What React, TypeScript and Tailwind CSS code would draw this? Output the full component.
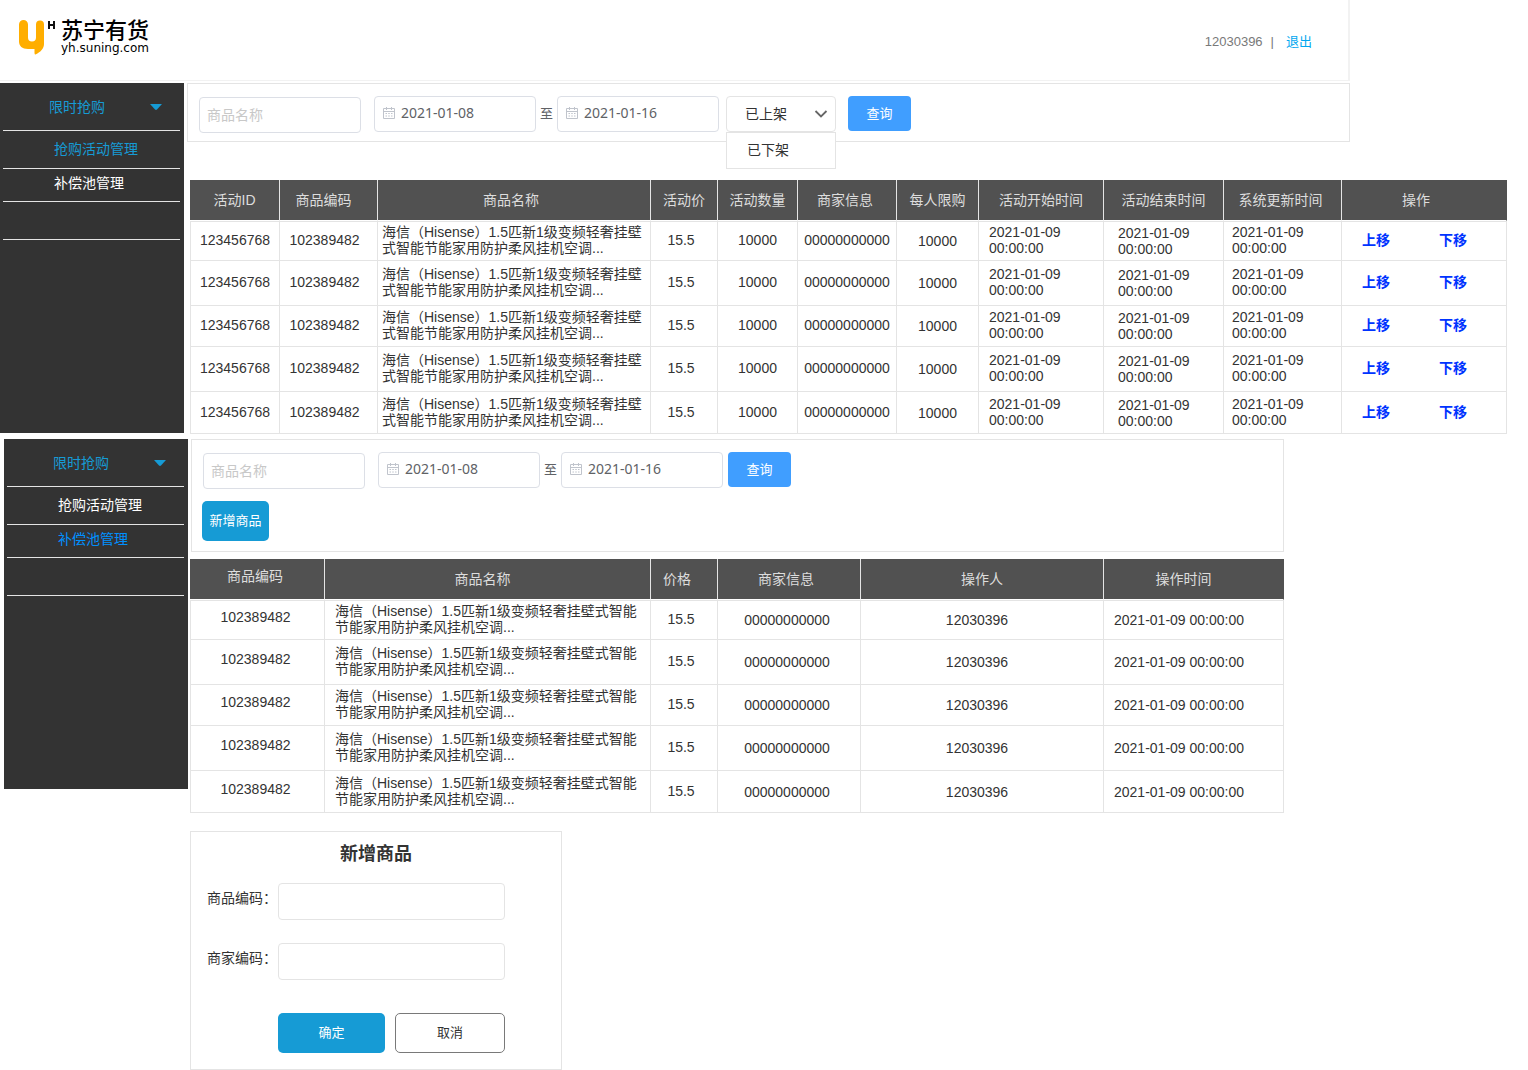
import React from "react";

const PRODUCT = "海信（Hisense）1.5匹新1级变频轻奢挂壁式智能节能家用防护柔风挂机空调...";
const STAMP = "2021-01-09 00:00:00";
const ROW_HEIGHTS = ["h-10", "h-[45px]", "h-[41px]", "h-[45px]", "h-[42px]"];

type Column = {
  title: string;
  width: string;
  head: string;
  cell: string;
  value: React.ReactNode;
};

function MoveActions() {
  return (
    <div className="flex gap-[49px]">
      <button type="button" className="font-bold text-[#0033ff]">上移</button>
      <button type="button" className="font-bold text-[#0033ff]">下移</button>
    </div>
  );
}

const activityColumns: Column[] = [
  { title: "活动ID", width: "w-[90px]", head: "", cell: "text-center pb-0.5", value: "123456768" },
  { title: "商品编码", width: "w-[98px]", head: "pr-2.5", cell: "text-center pr-2 pb-0.5", value: "102389482" },
  { title: "商品名称", width: "w-[273px]", head: "pr-1.5", cell: "pl-1 pr-1 pb-0.5", value: PRODUCT },
  { title: "活动价", width: "w-[67px]", head: "", cell: "text-center pr-1.5 pb-0.5", value: "15.5" },
  { title: "活动数量", width: "w-[80px]", head: "", cell: "text-center pb-0.5", value: "10000" },
  { title: "商家信息", width: "w-[99px]", head: "pr-1", cell: "text-center pb-0.5", value: "00000000000" },
  { title: "每人限购", width: "w-[82px]", head: "", cell: "text-center", value: "10000" },
  { title: "活动开始时间", width: "w-[125px]", head: "", cell: "pl-2.5 pb-0.5", value: STAMP },
  { title: "活动结束时间", width: "w-[120px]", head: "", cell: "pl-3.5", value: STAMP },
  { title: "系统更新时间", width: "w-[118px]", head: "pr-1", cell: "pl-2 pb-0.5", value: STAMP },
  { title: "操作", width: "w-[165px]", head: "pr-4", cell: "pl-5 pb-0.5", value: <MoveActions /> },
];

const poolColumns: Column[] = [
  { title: "商品编码", width: "w-[135px]", head: "pr-1 pb-1.5", cell: "text-center pr-1 pb-1.5", value: "102389482" },
  { title: "商品名称", width: "w-[326px]", head: "pr-2.5", cell: "pl-2.5 pr-2 pb-0.5", value: PRODUCT },
  { title: "价格", width: "w-[67px]", head: "pr-3.5", cell: "text-center pr-1.5 pb-0.5", value: "15.5" },
  { title: "商家信息", width: "w-[143px]", head: "pr-1.5", cell: "text-center pr-1", value: "00000000000" },
  { title: "操作人", width: "w-[243px]", head: "", cell: "text-center pr-2.5", value: "12030396" },
  { title: "操作时间", width: "w-[180px]", head: "pr-5", cell: "pl-2.5", value: STAMP },
];

function DataTable({ columns }: { columns: Column[] }) {
  return (
    <table className="w-full table-fixed border-separate border-spacing-0 text-sm/4 text-[#333]">
      <thead>
        <tr className="h-[41px]">
          {columns.map((c) => (
            <th
              key={c.title}
              scope="col"
              className={`${c.width} ${c.head} border-r border-b border-r-[#e4e4e4] border-b-white bg-[#515151] bg-clip-padding text-center font-normal whitespace-nowrap text-[#ddd] last:border-r-[#515151]`}
            >
              {c.title}
            </th>
          ))}
        </tr>
      </thead>
      <tbody>
        {ROW_HEIGHTS.map((h, i) => (
          <tr key={i} className={`group ${h}`}>
            {columns.map((c) => (
              <td
                key={c.title}
                className={`${c.cell} border-r border-b border-[#e4e4e4] group-first:border-t first:border-l`}
              >
                {c.value}
              </td>
            ))}
          </tr>
        ))}
      </tbody>
    </table>
  );
}

function Logo() {
  return (
    <a href="#home" aria-label="苏宁有货" className="flex text-black">
      <svg width="36" height="36" viewBox="0 0 36 36" aria-hidden="true">
        <path
          d="M4.5 0 A4.5 4.5 0 0 1 9 4.5 V17.5 A4 4 0 0 0 17 17.5 V4.5 A4 4 0 0 1 25 4.5 V24 C25 28 22 32 16.500 34.500 Q15.500 34.500 15.500 33 V29 H9 C3 29 0 26 0 21.500 V4.500 A4.500 4.500 0 0 1 4.500 0Z"
          fill="#ffae00"
        />
        <path d="M30 1 V9 M35 1 V9 M30 5 H35" stroke="#111" strokeWidth="2" fill="none" />
      </svg>
      <span className="ml-1.5 flex flex-col">
        <span className="text-[22px]/[22px] font-medium">苏宁有货</span>
        <span className="font-['DejaVu_Sans',sans-serif] text-xs/3">yh.suning.com</span>
      </span>
    </a>
  );
}

function Sidebar({ active, activeColor, className }: { active: number; activeColor: string; className: string }) {
  return (
    <aside className={`h-[350px] w-[184px] shrink-0 bg-[#333] pr-1 pl-[3px] text-sm text-white ${className}`}>
      <nav>
        <button
          type="button"
          className="flex h-12 w-full items-center justify-between border-b border-[#e4e4e4] pr-[18px] pl-[46px] text-[#169bd5]"
        >
          限时抢购
          <svg width="12" height="6" viewBox="0 0 12 6" aria-hidden="true">
            <path d="M0 0H12L7 5.500Q6 6.300 5 5.500Z" fill="#169bd5" />
          </svg>
        </button>
        <a
          href="#activity"
          className={`flex h-[38px] items-center border-b border-[#e4e4e4] pb-0.5 pl-[51px] ${active === 0 ? activeColor : ""}`}
        >
          抢购活动管理
        </a>
        <a
          href="#pool"
          className={`flex h-[33px] items-center border-b border-[#e4e4e4] pb-1 pl-[51px] ${active === 1 ? activeColor : ""}`}
        >
          补偿池管理
        </a>
        <div className="h-[38px] border-b border-[#e4e4e4]" />
      </nav>
    </aside>
  );
}

function CalendarIcon() {
  return (
    <svg width="12" height="12" viewBox="0 0 12 12" className="shrink-0" fill="none" stroke="#c0c4cc" aria-hidden="true">
      <path d="M0.500 1.500H11.500V11.500H0.500Z" />
      <path d="M0 4.500H12M3.500 0V3M8.500 0V3" />
      <path d="M2.500 6.500H9.500M2.500 9H9.500" strokeDasharray="1.500 1.250" />
    </svg>
  );
}

function DateField({ label, value }: { label: string; value: string }) {
  return (
    <label className="flex h-9 w-[162px] items-center gap-1.5 rounded border border-[#dcdfe6] bg-white px-2 pb-0.5">
      <CalendarIcon />
      <input
        type="text"
        aria-label={label}
        defaultValue={value}
        className="w-full min-w-0 font-['Noto_Sans',sans-serif] text-sm text-[#606266] outline-none"
      />
    </label>
  );
}

function SearchFields() {
  return (
    <>
      <input
        type="text"
        aria-label="商品名称"
        placeholder="商品名称"
        className="mt-px h-9 w-[162px] rounded border border-[#dcdfe6] px-[7px] text-sm text-[#606266] outline-none placeholder:text-[#c8c8c8]"
      />
      <div className="ml-[13px] flex items-center">
        <DateField label="开始日期" value="2021-01-08" />
        <span className="w-[21px] text-center text-[13px] text-[#606266]">至</span>
        <DateField label="结束日期" value="2021-01-16" />
      </div>
    </>
  );
}

function QueryButton({ className }: { className: string }) {
  return (
    <button type="button" className={`h-[35px] w-[63px] rounded bg-[#409eff] text-[13px] text-white ${className}`}>
      查询
    </button>
  );
}

function StatusSelect() {
  return (
    <div className="relative ml-[7px] w-[110px]">
      <select
        aria-label="状态"
        className="block h-9 w-full appearance-none rounded border border-[#e4e4e4] bg-white pl-[18px] text-sm text-[#333] outline-none"
      >
        <option>已上架</option>
        <option>已下架</option>
      </select>
      <svg
        width="14"
        height="9"
        viewBox="0 0 14 9"
        className="pointer-events-none absolute top-3.5 right-2"
        fill="none"
        stroke="#666"
        strokeWidth="1.800"
        aria-hidden="true"
      >
        <path d="M1.500 1L7 6.500L12.500 1" />
      </svg>
      <ul className="absolute top-full left-0 w-full border border-[#e4e4e4] bg-white text-sm text-[#333]">
        <li className="flex h-[35px] items-center pb-0.5 pl-5">已下架</li>
      </ul>
    </div>
  );
}

function AddProductForm() {
  const field = "h-[37px] w-[227px] rounded-sm border border-[#e4e4e4] px-2 text-sm outline-none";
  return (
    <form
      className="mt-[18px] flex h-[239px] w-[372px] flex-col border border-[#e4e4e4] pt-2 pl-4 text-[#333]"
      onSubmit={(e) => e.preventDefault()}
    >
      <h2 className="pr-4 text-center text-lg/7 font-bold">新增商品</h2>
      <div className="mt-[15px] flex">
        <label htmlFor="product-code" className="w-[71px] pt-[3px] text-sm/6">商品编码：</label>
        <input id="product-code" type="text" className={field} />
      </div>
      <div className="mt-[23px] flex">
        <label htmlFor="merchant-code" className="w-[71px] pt-[3px] text-sm/6">商家编码：</label>
        <input id="merchant-code" type="text" className={field} />
      </div>
      <div className="mt-[33px] flex gap-2.5 pl-[71px] text-[13px]">
        <button type="submit" className="h-10 w-[107px] rounded-[5px] bg-[#169bd5] text-white">确定</button>
        <button type="button" className="h-10 w-[110px] rounded-[5px] border border-[#797979] bg-white">取消</button>
      </div>
    </form>
  );
}

export default function App() {
  return (
    <div className="bg-white font-['Liberation_Sans','Noto_Sans_CJK_SC',sans-serif]">
      <header className="flex h-[81px] max-w-[1350px] items-start justify-between border-r-2 border-b border-[#f2f2f2] pt-5 pr-9 pl-[19px]">
        <Logo />
        <div className="flex h-11 items-center gap-2 text-[13px] text-[#797979]">
          <span>12030396</span>
          <span>|</span>
          <a href="#logout" className="ml-1 text-[#02a7f0]">退出</a>
        </div>
      </header>

      <section className="mt-0.5 flex gap-[3px]">
        <Sidebar active={0} activeColor="text-[#169bd5]" className="" />
        <main className="min-w-0 flex-1 pr-[21px]">
          <form
            className="flex h-[59px] max-w-[1163px] items-start border border-[#e4e4e4] pt-3 pl-[11px]"
            onSubmit={(e) => e.preventDefault()}
          >
            <SearchFields />
            <StatusSelect />
            <QueryButton className="ml-3" />
          </form>
          <div className="mt-[38px] pl-[3px]">
            <DataTable columns={activityColumns} />
          </div>
        </main>
      </section>

      <section className="mt-[5px] flex gap-0.5">
        <Sidebar active={1} activeColor="text-[#0090ff]" className="ml-1" />
        <div className="max-w-[1094px] min-w-0 flex-1">
          <form
            className="ml-px h-[113px] border border-[#e4e4e4] pt-3 pl-2.5"
            onSubmit={(e) => e.preventDefault()}
          >
            <div className="flex items-start pl-px">
              <SearchFields />
              <QueryButton className="ml-[5px]" />
            </div>
            <button type="button" className="mt-3 h-10 w-[67px] rounded-[5px] bg-[#169bd5] text-[13px] text-white">
              新增商品
            </button>
          </form>
          <div className="mt-[7px]">
            <DataTable columns={poolColumns} />
          </div>
          <AddProductForm />
        </div>
      </section>
    </div>
  );
}
